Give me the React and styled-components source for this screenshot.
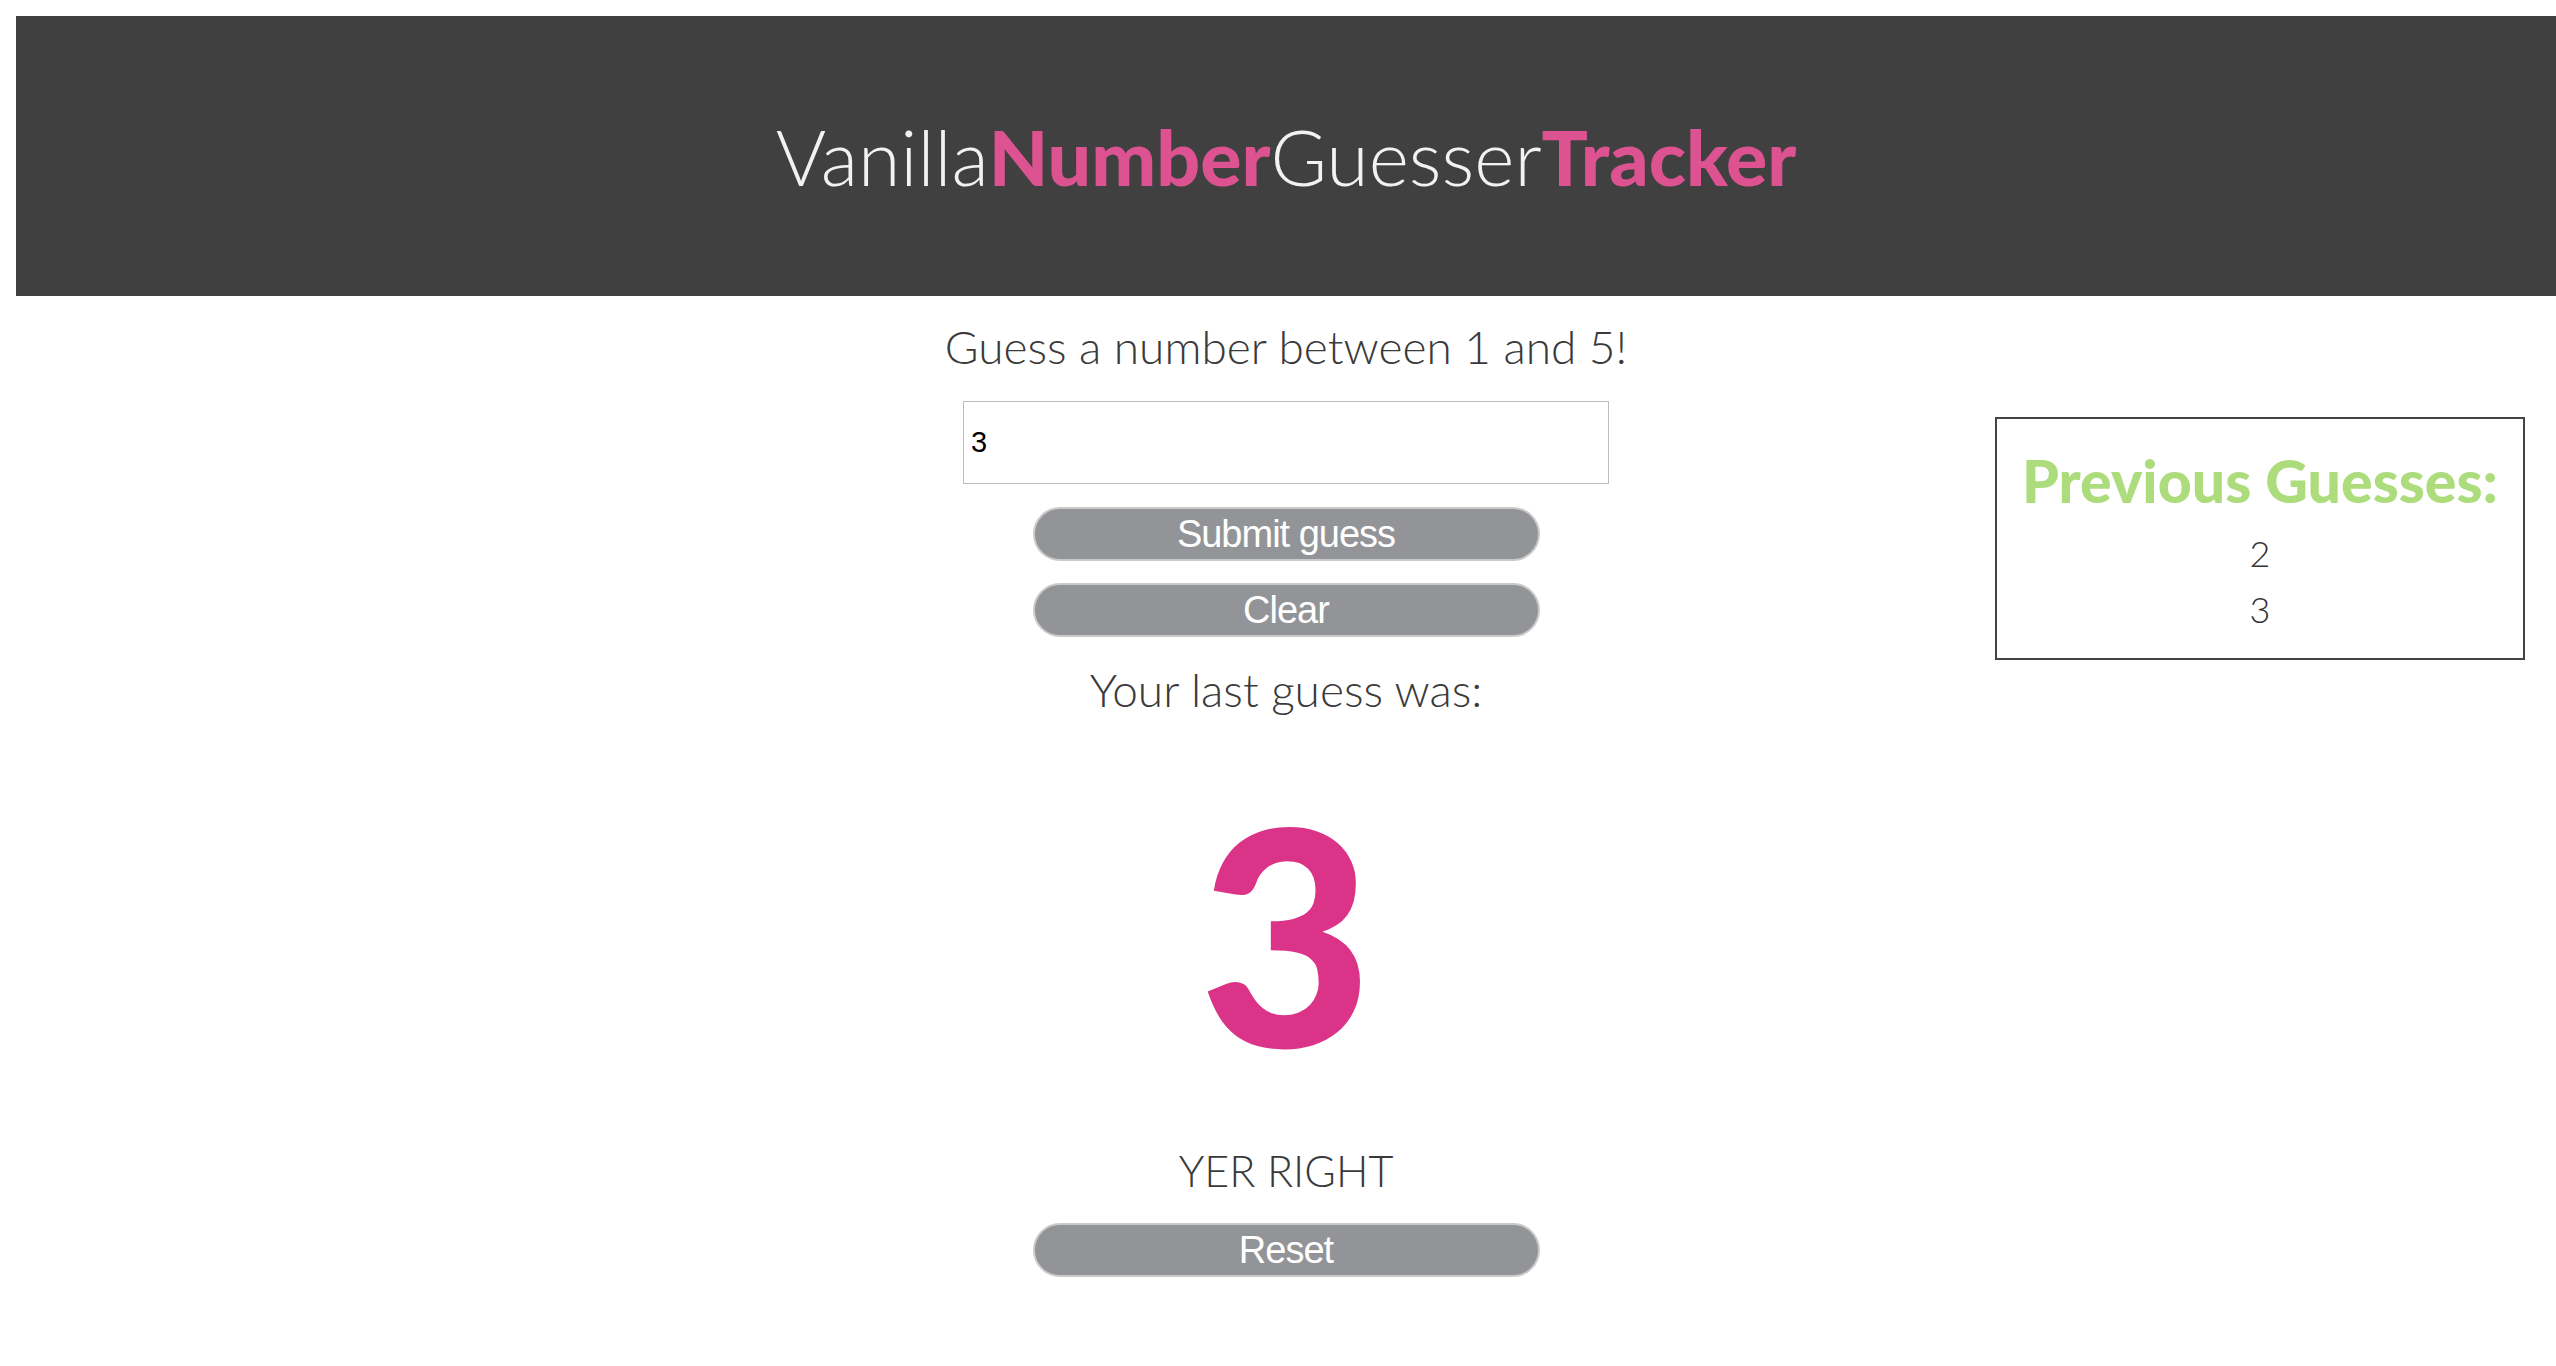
import React from "react";
import styled, { createGlobalStyle } from "styled-components";

const GlobalStyle = createGlobalStyle`
  html, body {
    margin: 0;
    padding: 0;
    background: #ffffff;
  }
  body {
    font-family: Lato, "Liberation Sans", sans-serif;
    color: #3a3a3a;
  }
`;

const Page = styled.div`
  padding: 16px 0 0 16px;
`;

const Header = styled.header`
  height: 280px;
  background: #404040;
  display: flex;
  align-items: center;
  justify-content: center;
`;

const Title = styled.h1`
  margin: 0;
  font-size: 77px;
  line-height: 1.2;
  font-weight: 300;
  color: #f2f2f2;
  white-space: nowrap;
`;

const Accent = styled.span`
  font-weight: 900;
  color: #dd5290;
`;

const Main = styled.main`
  display: grid;
  grid-template-columns: 1fr 646px 1fr;
  align-items: start;
`;

const Column = styled.section`
  grid-column: 2;
  display: flex;
  flex-direction: column;
  align-items: center;
`;

const Text = styled.p`
  margin: ${props => props.$top}px 0 0;
  font-size: ${props => props.$size}px;
  line-height: 1.2;
  font-weight: 300;
  white-space: nowrap;
  color: #3a3a3a;
`;

const GuessInput = styled.input`
  box-sizing: border-box;
  margin-top: 27px;
  width: 646px;
  height: 83px;
  border: 1px solid #bdbdbd;
  padding: 0 7px;
  font-family: "Liberation Sans", Arial, sans-serif;
  font-size: 29px;
  color: #000;
  outline: none;
`;

const Button = styled.button`
  box-sizing: border-box;
  margin-top: ${props => props.$top}px;
  width: 507px;
  height: 54px;
  border: 2px solid #cacaca;
  border-radius: 27px;
  background: #939497;
  color: #ffffff;
  font-family: "Liberation Sans", Arial, sans-serif;
  font-size: 38px;
  letter-spacing: -1px;
  line-height: 1;
  padding: 0;
  cursor: pointer;
`;

const BigNumber = styled.div`
  margin-top: 64px;
  font-size: 300px;
  line-height: 300px;
  height: 300px;
  font-weight: 900;
  color: #da3388;
`;

const Aside = styled.aside`
  grid-column: 3;
  justify-self: end;
  box-sizing: border-box;
  margin: 121px 31px 0 0;
  width: 530px;
  border: 2px solid #444444;
  padding: 27px 0 21px;
  text-align: center;
`;

const AsideTitle = styled.h2`
  margin: 0;
  font-size: 59px;
  line-height: 1.2;
  font-weight: 900;
  color: #addc7c;
  white-space: nowrap;
`;

const GuessList = styled.ul`
  list-style: none;
  margin: 8px 0 0;
  padding: 0;
`;

const GuessItem = styled.li`
  font-size: 36px;
  line-height: 56px;
  font-weight: 300;
  color: #333333;
`;

const previous = [2, 3];

export default function App() {
  return (
    <Page>
      <GlobalStyle />
      <Header>
        <Title>
          Vanilla<Accent>Number</Accent>Guesser<Accent>Tracker</Accent>
        </Title>
      </Header>
      <Main>
        <Column>
          <Text $size={46} $top={23}>Guess a number between 1 and 5!</Text>
          <GuessInput type="text" defaultValue="3" />
          <Button $top={23}>Submit guess</Button>
          <Button $top={22}>Clear</Button>
          <Text $size={46} $top={25}>Your last guess was:</Text>
          <BigNumber>3</BigNumber>
          <Text $size={43} $top={64}>YER RIGHT</Text>
          <Button $top={26}>Reset</Button>
        </Column>
        <Aside>
          <AsideTitle>Previous Guesses:</AsideTitle>
          <GuessList>
            {previous.map(n => (
              <GuessItem key={n}>{n}</GuessItem>
            ))}
          </GuessList>
        </Aside>
      </Main>
    </Page>
  );
}
